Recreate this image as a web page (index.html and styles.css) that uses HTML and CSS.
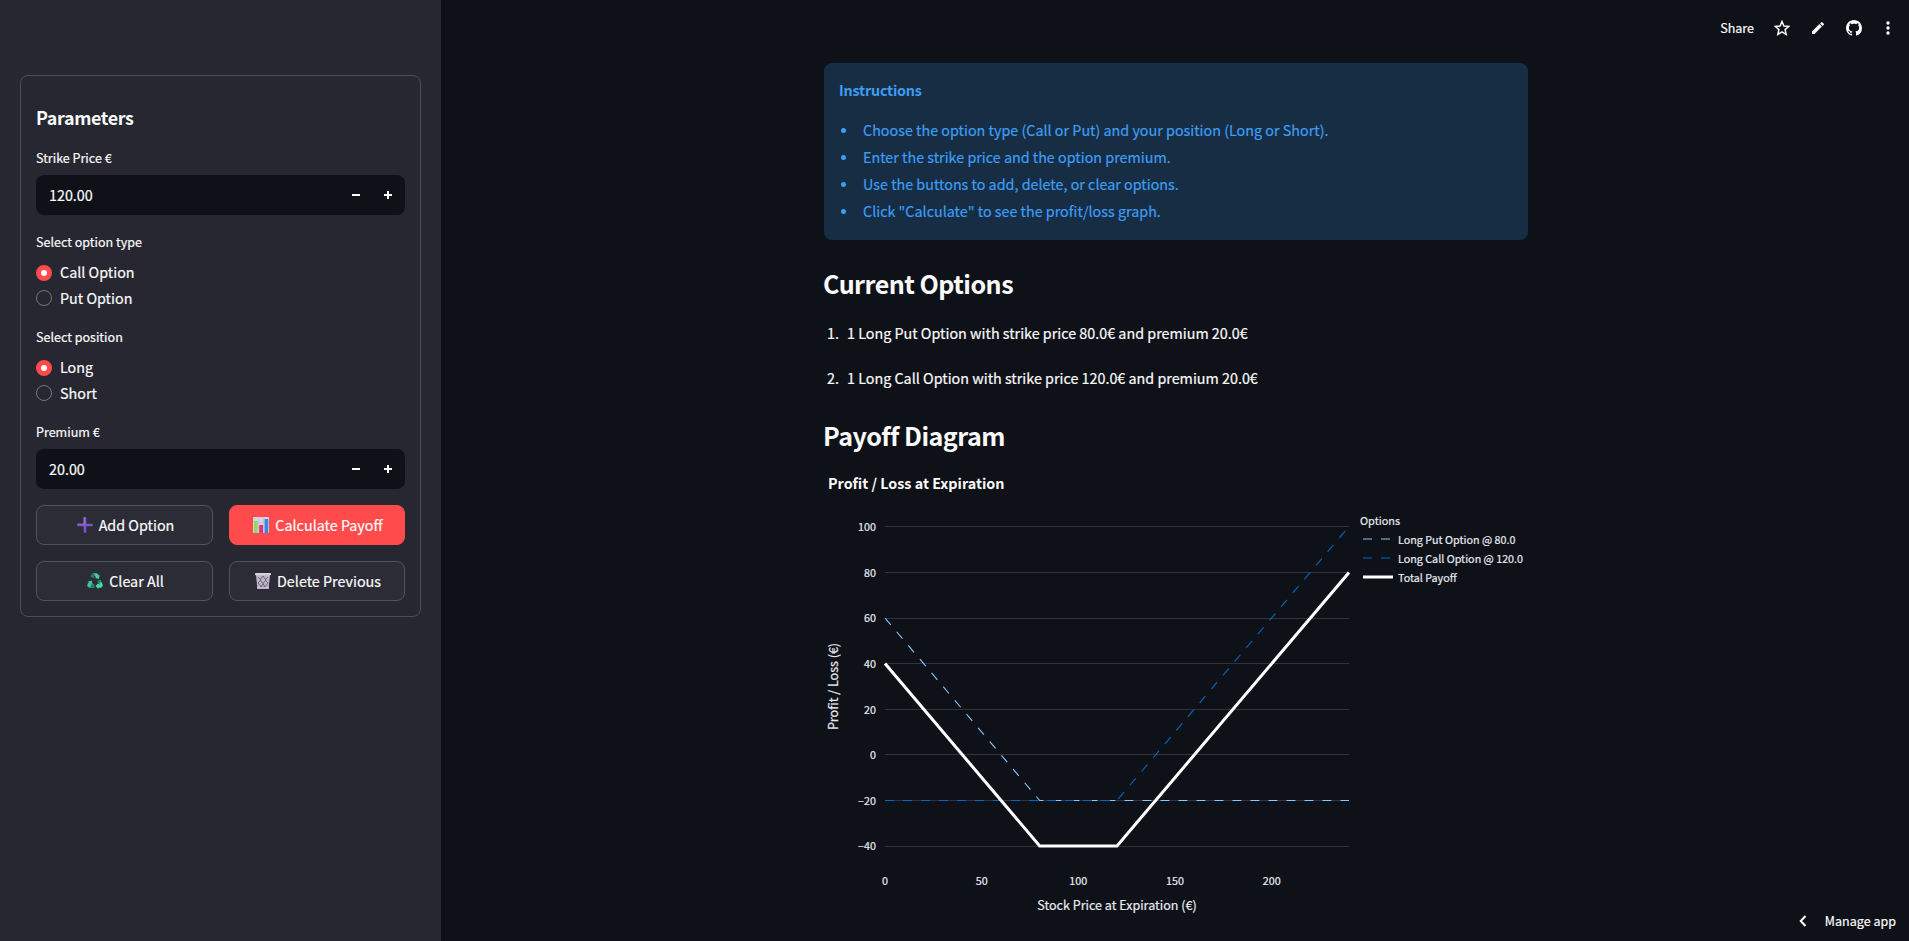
FILE: index.html
```html
<!DOCTYPE html>
<html lang="en">
<head>
<meta charset="utf-8">
<title>Option Payoff</title>
<link rel="stylesheet" href="styles.css">
</head>
<body>
<div class="app">
  <aside class="sidebar">
    <form class="panel">
      <h3 class="panel-title">Parameters</h3>
      <div class="label">Strike Price €</div>
      <div class="number"><span class="value">120.00</span>
        <svg class="step" viewBox="0 0 8 8"><path d="M0 3h8v2H0z"/></svg>
        <svg class="step" viewBox="0 0 8 8"><path d="M0 3h3V0h2v3h3v2H5v3H3V5H0z"/></svg>
      </div>
      <div class="label label-group">Select option type</div>
      <div class="radios">
        <div class="radio"><i class="dot on"></i><span>Call Option</span></div>
        <div class="radio"><i class="dot"></i><span>Put Option</span></div>
      </div>
      <div class="label label-group">Select position</div>
      <div class="radios">
        <div class="radio"><i class="dot on"></i><span>Long</span></div>
        <div class="radio"><i class="dot"></i><span>Short</span></div>
      </div>
      <div class="label label-premium">Premium €</div>
      <div class="number"><span class="value">20.00</span>
        <svg class="step" viewBox="0 0 8 8"><path d="M0 3h8v2H0z"/></svg>
        <svg class="step" viewBox="0 0 8 8"><path d="M0 3h3V0h2v3h3v2H5v3H3V5H0z"/></svg>
      </div>
      <div class="buttons">
        <div class="button">
          <svg class="emoji" viewBox="0 0 16 16"><path d="M6.700.3h2.600v6.400h6.400v2.600H9.300v6.400H6.700V9.300H.3V6.700h6.400z" fill="#7d55c7"/><path d="M6.700.3h1.100v6.900H.3v-.5h6.400z" fill="#a184dc"/></svg>
          <span>Add Option</span>
        </div>
        <div class="button primary">
          <svg class="emoji" viewBox="0 0 16 16"><rect width="16" height="16" rx="1" fill="#d9d4e4"/><path d="M5.300 0v16M10.600 0v16M0 5.300h16M0 10.600h16" stroke="#bdb4cd" stroke-width=".6"/><rect x="1" y="4" width="3.600" height="12" fill="#8fdc5a"/><rect x="6.200" y="8" width="3.800" height="8" fill="#e0307e"/><rect x="11.600" y="2" width="3.600" height="14" fill="#2f8be0"/></svg>
          <span>Calculate Payoff</span>
        </div>
        <div class="button">
          <svg class="emoji" viewBox="0 0 16 16"><path d="M5.100 1.200Q5.600.2 6.800.2h2.600q1 0 1.600 1l.8 1.400 1-.5-1 4-4-1 1.100-.6L7.800 2.300 6.500 4.700 3.600 3.800z" fill="#3fd39a"/><path d="M13 6.700l2.400 4.100q.8 1.600-.2 2.900-.6 1-1.900 1h-1.900v1.200L8.500 13l2.900-3v1.300h1.500L10.400 8.200z" fill="#42dc9e"/><path d="M7.200 11.400v3.300H2.600q-1.200 0-1.900-1.100-.8-1.200-.1-2.500l1.200-2-1-.6 3.900-1 1 4-1-.6-.3.500z" fill="#38c78f"/><path d="M6.800.2 8 2.300 6.500 4.700 3.600 3.800 5.100 1.200z" fill="#267a67"/><path d="m13 6.700 1.200 2-2.700 1.700-1.100-2.200z" fill="#267a67"/><path d="M4.600 11.400h2.600v3.300H3z" fill="#267a67"/></svg>
          <span>Clear All</span>
        </div>
        <div class="button">
          <svg class="emoji" viewBox="0 0 16 16"><path d="M1 2h14l-1.400 13.600H2.400z" fill="#bdb6c9"/><path d="m3 4 3 3-3 3 3 4M13 4l-3 3 3 3-3 4M8 3 5 7l3 3.500L11 7zM8 10.500 6 14h4z" fill="none" stroke="#5a5366" stroke-width=".8"/><rect y="0" width="16" height="2.200" rx=".6" fill="#d6d0df"/><rect x="2" y="14" width="12" height="1.800" rx=".5" fill="#cbc4d6"/></svg>
          <span>Delete Previous</span>
        </div>
      </div>
    </form>
  </aside>

  <main class="main">
    <header class="toolbar">
      <span class="share">Share</span>
      <svg class="tool star" viewBox="0 0 16 16"><path d="m8 1.500 1.900 4.500 4.900.4-3.700 3.200 1.100 4.800L8 11.900l-4.200 2.500 1.100-4.800L1.200 6.400 6.100 6z" fill="none" stroke="#fafafa" stroke-width="1.500"/></svg>
      <svg class="tool pencil" viewBox="0 0 16 16"><path d="M2 11.500V14h2.500l7.400-7.400-2.500-2.500zM13.800 4.700a.66.66 0 0 0 0-.94L12.240 2.200a.66.66 0 0 0-.94 0l-1.220 1.220 2.500 2.500z" fill="#fafafa"/></svg>
      <svg class="tool github" viewBox="0 0 16 16"><path fill="#fafafa" d="M8 0C3.580 0 0 3.580 0 8c0 3.540 2.290 6.530 5.470 7.590.4.070.55-.17.55-.38 0-.19-.01-.82-.01-1.490-2.010.37-2.530-.49-2.690-.94-.09-.23-.48-.94-.82-1.130-.28-.15-.68-.52-.01-.53.63-.01 1.080.58 1.230.82.72 1.210 1.870.87 2.330.66.07-.52.28-.87.51-1.070-1.780-.2-3.640-.89-3.640-3.950 0-.87.31-1.590.82-2.150-.08-.2-.36-1.020.08-2.120 0 0 .67-.21 2.200.82.64-.18 1.320-.27 2-.27s1.360.09 2 .27c1.530-1.040 2.200-.82 2.200-.82.44 1.100.16 1.920.08 2.120.51.56.82 1.270.82 2.150 0 3.070-1.870 3.750-3.650 3.950.29.25.54.73.54 1.480 0 1.070-.01 1.930-.01 2.200 0 .21.15.46.55.38A8 8 0 0 0 16 8c0-4.420-3.580-8-8-8z"/></svg>
      <svg class="tool dots" viewBox="0 0 16 16"><g fill="#fafafa"><circle cx="8" cy="3" r="1.700"/><circle cx="8" cy="8" r="1.700"/><circle cx="8" cy="13" r="1.700"/></g></svg>
    </header>

    <div class="content">
      <section class="alert">
        <p class="alert-title">Instructions</p>
        <ul class="steps">
          <li>Choose the option type (Call or Put) and your position (Long or Short).</li>
          <li>Enter the strike price and the option premium.</li>
          <li>Use the buttons to add, delete, or clear options.</li>
          <li>Click "Calculate" to see the profit/loss graph.</li>
        </ul>
      </section>
      <h2 class="heading">Current Options</h2>
      <div class="option"><span class="index">1.</span><span>1 Long Put Option with strike price 80.0€ and premium 20.0€</span></div>
      <div class="option"><span class="index">2.</span><span>1 Long Call Option with strike price 120.0€ and premium 20.0€</span></div>
      <h2 class="heading heading-chart">Payoff Diagram</h2>
      <svg class="chart" viewBox="0 0 704 471">
        <text class="chart-title" x="4" y="19">Profit / Loss at Expiration</text>
        <path class="grid" d="M61 56.500H525M61 102.500H525M61 148.500H525M61 193.500H525M61 239.500H525M61 284.500H525M61 330.500H525M61 376.500H525"/>
        <g class="tick tick-y">
          <text x="52" y="61">100</text><text x="52" y="107">80</text><text x="52" y="152">60</text><text x="52" y="198">40</text><text x="52" y="244">20</text><text x="52" y="289">0</text><text x="52" y="335">−20</text><text x="52" y="380">−40</text>
        </g>
        <g class="tick tick-x">
          <text x="61" y="415">0</text><text x="157.700" y="415">50</text><text x="254.300" y="415">100</text><text x="351" y="415">150</text><text x="447.700" y="415">200</text>
        </g>
        <text class="axis-title" x="293" y="440">Stock Price at Expiration (€)</text>
        <text class="axis-title" transform="translate(14 216.500) rotate(-90)">Profit / Loss (€)</text>
        <path class="series put" d="M61 148 215.700 330.500H525"/>
        <path class="series call" d="M61 330.500H293L525 56.500"/>
        <path class="total" d="M61 193.500 215.700 376H293L525 102.500"/>
        <text class="legend-title" x="536" y="55">Options</text>
        <path class="series put" d="M539 69H569"/>
        <path class="series call" d="M539 88H569"/>
        <path class="total" d="M539 107H569"/>
        <g class="legend">
          <text x="574" y="74">Long Put Option @ 80.0</text><text x="574" y="93">Long Call Option @ 120.0</text><text x="574" y="112">Total Payoff</text>
        </g>
      </svg>
    </div>

    <div class="manage">
      <svg class="chevron" viewBox="0 0 8 12"><path d="M6.500 1 1.700 6l4.800 5" fill="none" stroke="#fff" stroke-width="2"/></svg>
      <span>Manage app</span>
    </div>
  </main>
</div>
</body>
</html>
```

FILE: styles.css
```css
* { box-sizing: border-box; }
body {
  margin: 0;
  background: #0e1117;
  color: #fafafa;
  font-family: "Noto Sans CJK SC", "Noto Sans", sans-serif;
  font-size: 14.33px;
  line-height: 24px;
  -webkit-text-stroke: .2px;
}
h2, h3, p, ul { margin: 0; padding: 0; }
svg { display: block; flex: none; }
.app { display: flex; width: 100%; height: 941px; overflow: hidden; }

.sidebar { flex: none; width: 441px; padding: 75px 20px 0; background: #262730; }
.panel {
  width: 401px;
  height: 542px;
  padding: 29px 15px 0;
  border: 1px solid #4b4c55;
  border-radius: 8px;
}
h2, h3, .alert-title { -webkit-text-stroke: 0; }
.panel-title { font-size: 17.9px; font-weight: 700; line-height: 24px; letter-spacing: -.36px; }
.label { margin-top: 19px; font-size: 12.54px; line-height: 20px; height: 20px; }
.number {
  display: flex;
  align-items: center;
  gap: 24px;
  height: 40px;
  margin-top: 7px;
  padding: 0 13px;
  border-radius: 8px;
  background: #0e1117;
}
.value { flex: 1; margin-top: -1px; }
.step { width: 8px; height: 8px; fill: #fafafa; }
.label-group { margin-top: 17px; }
.radios { display: flex; flex-direction: column; gap: 9px; margin-top: 13px; }
.radio { display: flex; align-items: center; gap: 8px; height: 16px; }
.radio span { margin-top: -2px; }
.radio + .radio span { margin-top: 0; }
.dot { width: 16px; height: 16px; border: 1px solid #75767d; border-radius: 50%; }
.dot.on { border: 5px solid #ff4b4b; background: #fafafa; }
.radios + .label { margin-top: 21px; }
.buttons { display: grid; grid-template-columns: 177px 176px; gap: 16px; margin-top: 16px; }
.button {
  display: flex;
  align-items: center;
  justify-content: center;
  gap: 6px;
  height: 40px;
  padding-left: 2px;
  border: 1px solid #51525a;
  border-radius: 8px;
  background: #2b2c36;
}
.button.primary { border-color: #ff4b4b; background: #ff4b4b; }
.emoji { width: 16px; height: 16px; }

.main { position: relative; flex: 1; }
.toolbar {
  display: flex;
  align-items: center;
  justify-content: flex-end;
  height: 63px;
  padding: 0 13px 7px 0;
}
.share { font-size: 12.54px; margin-right: 20px; }
.tool { width: 16px; height: 16px; }
.star { margin-right: 20px; }
.pencil { margin-right: 20px; }
.github { margin-right: 18px; }
.content { width: 704px; margin-left: 383px; }
.alert {
  height: 177px;
  padding: 13px 15px;
  border-radius: 8px;
  background: #172d43;
  color: #3d9df3;
}
.alert-title { font-weight: 700; line-height: 27px; letter-spacing: -.2px; }
.steps { margin-top: 13px; list-style: none; line-height: 27px; }
.steps li { display: flex; align-items: center; gap: 17px; padding-left: 2px; }
.steps li::before { content: ""; width: 5px; height: 5px; margin-top: 1px; border-radius: 50%; background: #3d9df3; }
.heading { margin: 25px 0 0 -1px; font-size: 25.1px; font-weight: 700; line-height: 36px; letter-spacing: -.52px; }
.option { display: flex; gap: 8px; height: 27px; margin: 18px 0 18px 3px; line-height: 27px; }
.index { width: 12px; }
.heading-chart { margin-top: 26px; }
.chart { width: 704px; height: 471px; margin-top: 17px; overflow: visible; fill: #e6eaf1; }
.chart text { stroke: #e6eaf1; stroke-width: .2px; }
.chart .chart-title { fill: #fafafa; stroke: none; font-size: 14.33px; font-weight: 700; }
.grid { stroke: #31333f; fill: none; }
.tick, .legend { font-size: 10.75px; }
.tick-y { text-anchor: end; }
.tick-x, .axis-title { text-anchor: middle; }
.axis-title { font-size: 12.54px; }
.legend-title { font-size: 10.9px; }
.series { fill: none; stroke-width: 1.1; stroke-dasharray: 9 9; }
.put { stroke: #83c9ff; }
.call { stroke: #0068c9; }
.total { fill: none; stroke: #fff; stroke-width: 3; }
.manage {
  position: absolute;
  right: 13px;
  bottom: 8px;
  display: flex;
  align-items: center;
  gap: 18px;
  font-size: 12.54px;
}
.chevron { width: 8px; height: 12px; }
```
